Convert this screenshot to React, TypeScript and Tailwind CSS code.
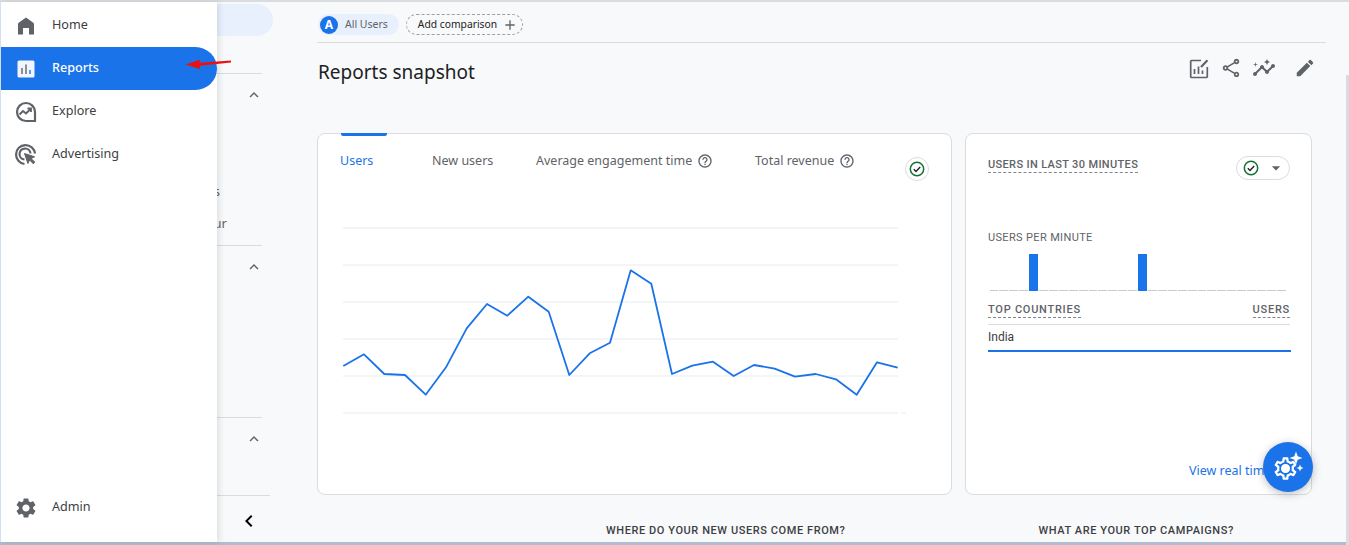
import { MdEdit, MdInsights, MdOutlineSettings, MdOutlineShare, MdSettings, MdOutlineHelpOutline, MdArrowDropDown, MdAdd, MdKeyboardArrowUp, MdChevronLeft } from "react-icons/md";

const sans = "font-['Noto_Sans',sans-serif]";
const caps = "font-['Roboto',sans-serif]";

const points = "343.3,366 364,354.3 384.3,374 405,375 425.7,394.7 446,367.3 466.7,328.3 487,304 507.3,315.7 528.3,296.7 548.7,311.7 569.3,375 589.7,353.3 610,342.7 630.7,270.3 651.3,283.7 672,374 692.3,365.7 713,361.7 733.7,376 754,365 774.7,368.7 795,376.7 815.7,374 836,379.3 856.7,394.7 877,362.3 897.7,367.7";
const gridLines = [228, 265, 302, 339, 376, 413];
const minutes = Array.from({ length: 30 }, (_, i) => i);

function CheckIcon() {
    return (
        <svg width="16" height="16" viewBox="0 0 16 16" fill="none">
            <circle cx="8" cy="8" r="6.7" stroke="#137333" strokeWidth="1.5" />
            <path d="M4.8 8.2l2.2 2.2 4.2-4.4" stroke="#202124" strokeWidth="1.4" />
        </svg>
    );
}

function HomeIcon() {
    return (
        <svg width="24" height="24" viewBox="0 0 24 24" fill="#5f6368">
            <path d="M4 20.5V10.5C4 9.5 4.500 9 5 8.600L12 3.500l7 5.100c.5.4 1 .9 1 1.900v10h-5v-6.500H9v6.500z" />
        </svg>
    );
}

function ReportsIcon() {
    return (
        <svg width="24" height="24" viewBox="0 0 24 24">
            <rect x="3.500" y="3.500" width="17" height="17" rx="1.500" fill="#f1f5fd" />
            <path d="M8 11v6" stroke="#5f6368" strokeWidth="1.400" />
            <path d="M12 7.500V17" stroke="#5f6368" strokeWidth="1.400" />
            <path d="M16 13v4" stroke="#1a73e8" strokeWidth="1.400" />
        </svg>
    );
}

function ExploreIcon() {
    return (
        <svg width="24" height="24" viewBox="0 0 24 24" fill="none" stroke="#5f6368" strokeWidth="2.200">
            <path d="M21 21h-9a9 9 0 1 1 9-9z" />
            <path d="M5.500 14.500l3.500-3.500 3 2.500 4.500-4.500" strokeWidth="2" />
            <path d="M13.500 8.500h3.500V12" strokeWidth="1.800" />
        </svg>
    );
}

function AdvertisingIcon() {
    return (
        <svg width="24" height="24" viewBox="0 0 24 24" fill="none" stroke="#5f6368" strokeWidth="2.200">
            <path d="M10.500 21A9.500 9.500 0 1 1 21 10.500" />
            <path d="M10.500 16.500A5.500 5.500 0 1 1 16.500 10.500" />
            <path d="M10.500 10.500l3.400 10 1.700-3.600 3.700 3.900 1.600-1.600-3.900-3.700 3.600-1.700z" fill="#5f6368" strokeWidth="1" />
        </svg>
    );
}

function ReportEditIcon() {
    return (
        <svg width="21" height="21" viewBox="0 0 21 21" fill="none" stroke="#5f6368" strokeWidth="1.700">
            <path d="M12 2.500H2.500A.8.8 0 0 0 1.700 3.300V18.700a.8.8 0 0 0 .8.8H17.500a.8.8 0 0 0 .8-.8V9" />
            <path d="M5.500 11v5M9.500 8.500V16M13.500 12.500V16" />
            <path d="M12 9l6.500-6.700" strokeWidth="2.200" />
        </svg>
    );
}

function AssistantIcon() {
    return (
        <svg width="50" height="50" viewBox="0 0 50 50" fill="none">
            <MdOutlineSettings x="9" y="13" size={27} color="#fff" />
            <circle cx="22.500" cy="26.500" r="4" fill="#fff" />
            <path d="M33 9.500l1.700 4.800 4.800 1.700-4.800 1.700-1.700 4.800-1.700-4.800-4.800-1.700 4.800-1.700z" fill="#fff" />
            <path d="M37 22.500l1 2.500 2.500 1-2.500 1-1 2.500-1-2.500-2.500-1 2.500-1z" fill="#fff" />
        </svg>
    );
}

function NavItem({ label, icon, active }: { label: string; icon: React.ReactNode; active?: boolean }) {
    return (
        <div className={`flex h-[43px] items-center rounded-r-[22px] pl-[13px] ${active ? "bg-[#1a73e8] text-white" : "text-[#3c4043]"}`}>
            <span className="flex w-[24px] justify-center">{icon}</span>
            <span className={`ml-[14px] text-[12.6px] ${active ? "font-medium" : ""}`}>{label}</span>
        </div>
    );
}

function SideSection({ height, lines, last }: { height: string; lines?: string[]; last?: boolean }) {
    return (
        <div className={`${height} border-b border-[#dadce0] ${last ? "mr-0" : "mr-[8px]"}`}>
            <div className={`flex justify-end pt-[12px] text-[#5f6368] ${last ? "mr-[7px]" : "-mr-[1px]"}`}>
                <MdKeyboardArrowUp size={18} />
            </div>
            {lines && (
                <div className="mt-[79px] flex flex-col items-end gap-[16px] pr-[35px] text-[13px] leading-[16px] text-[#5f6368]">
                    {lines.map((l) => (
                        <span key={l} className="first:mr-[7px]">{l}</span>
                    ))}
                </div>
            )}
        </div>
    );
}

function Sidebar() {
    return (
        <aside className="flex w-[270px] shrink-0 flex-col">
            <div className="mr-[8px] h-[72px] border-b border-[#dadce0]">
                <div className="mt-[2px] -mr-[11px] h-[32px] rounded-r-[16px] bg-[#e8f0fe]" />
            </div>
            <SideSection height="h-[172px]" lines={["Search queries", "User behaviour"]} />
            <SideSection height="h-[172px]" />
            <SideSection height="h-[78px]" last />
            <div className="flex justify-end pt-[13px] pr-[9px] text-black">
                <MdChevronLeft size={24} />
            </div>
        </aside>
    );
}

function Tab({ label, width, help, active }: { label: string; width: string; help?: boolean; active?: boolean }) {
    return (
        <div className={`${width} flex h-[18px] items-center gap-[5px] text-[12.5px] leading-[18px] ${active ? "text-[#1a73e8]" : "text-[#5f6368]"}`}>
            <span>{label}</span>
            {help && <MdOutlineHelpOutline size={16} />}
        </div>
    );
}

function UsersChart() {
    return (
        <svg width="590" height="200" viewBox="330 220 590 200" className="mt-[39px] ml-[12px] block">
            {gridLines.map((y) => (
                <line key={y} x1="343" x2="898" y1={y} y2={y} stroke="#e8eaed" strokeWidth="1" />
            ))}
            <line x1="901" x2="906" y1="413" y2="413" stroke="#e8eaed" strokeWidth="1" />
            <polyline points={points} fill="none" stroke="#1a73e8" strokeWidth="1.800" strokeLinejoin="round" />
        </svg>
    );
}

function MainCard() {
    return (
        <section className="relative h-[362px] w-[635px] shrink-0 rounded-[8px] border border-[#dadce0] bg-white">
            <div className="absolute -top-px left-[23px] h-[3px] w-[46px] rounded-b-[2px] bg-[#1a73e8]" />
            <div className="flex pt-[18px] pl-[22px]">
                <Tab label="Users" width="w-[92px]" active />
                <Tab label="New users" width="w-[104px]" />
                <Tab label="Average engagement time" width="w-[219px]" help />
                <Tab label="Total revenue" width="w-[150px]" help />
                <div className="mt-[5px] flex h-[24px] w-[24px] items-center justify-center rounded-full border border-[#dadce0]">
                    <CheckIcon />
                </div>
            </div>
            <UsersChart />
        </section>
    );
}

function RealtimeCard() {
    return (
        <section className="flex h-[362px] w-[347px] shrink-0 flex-col rounded-[8px] border border-[#dadce0] bg-white pr-[21px] pl-[22px]">
            <div className="mt-[22px] flex items-start justify-between">
                <span className={`${caps} mt-[2px] border-b border-dashed border-[#80868b] text-[11px] leading-[14px] font-medium tracking-[0.35px] text-[#5f6368]`}>USERS IN LAST 30 MINUTES</span>
                <div className="flex h-[24px] w-[54px] items-center rounded-full border border-[#dadce0] pl-[6px] text-[#5f6368]">
                    <CheckIcon />
                    <MdArrowDropDown size={20} className="ml-[7px]" />
                </div>
            </div>
            <span className={`${caps} mt-[51px] text-[11px] leading-[14px] tracking-[0.35px] text-[#5f6368]`}>USERS PER MINUTE</span>
            <div className="mt-[9px] ml-[1px] flex h-[37px] w-[297px] items-end">
                {minutes.map((m) => (
                    <div key={m} className="flex-1 px-[0.5px]">
                        {m === 4 || m === 15 ? <div className="h-[37px] bg-[#1a73e8]" /> : <div className="h-px bg-[#c8cbd0]" />}
                    </div>
                ))}
            </div>
            <div className="mt-[12px] flex justify-between border-b border-[#dadce0] pb-[6px]">
                <span className={`${caps} border-b border-dashed border-[#80868b] text-[11px] leading-[14px] font-medium tracking-[0.75px] text-[#5f6368]`}>TOP COUNTRIES</span>
                <span className={`${caps} border-b border-dashed border-[#80868b] text-[11px] leading-[14px] font-medium tracking-[0.75px] text-[#5f6368]`}>USERS</span>
            </div>
            <div className={`${caps} -mr-[1px] h-[27px] border-b-2 border-[#1a73e8] pt-[4px] text-[12px] leading-[16px] text-[#3c4043]`}>India</div>
            <div className="mt-auto mb-[14px] ml-[201px] text-[12.5px] leading-[18px] whitespace-nowrap text-[#1a73e8]">View real time</div>
        </section>
    );
}

function ChipRow() {
    return (
        <div className="flex h-[41px] items-center gap-[7px] border-b border-[#dadce0] pl-[1px]">
            <div className="mt-[5px] flex h-[21px] items-center rounded-full bg-[#e8f0fe] pr-[11px] text-[10.5px] text-[#5f6368]">
                <span className="ml-[2px] flex h-[18px] w-[18px] items-center justify-center rounded-full bg-[#1a73e8] text-[12px] font-bold text-white">A</span>
                <span className="ml-[7px]">All Users</span>
            </div>
            <div className="mt-[5px] flex h-[21px] items-center gap-[5px] rounded-full border border-dashed border-[#9aa0a6] pr-[4px] pl-[11px] text-[10.3px] text-[#202124]">
                <span>Add comparison</span>
                <MdAdd size={16} className="text-[#5f6368]" />
            </div>
        </div>
    );
}

function TitleRow() {
    return (
        <div className="flex h-[90px] pr-[10px]">
            <h1 className="mt-[14px] ml-[1px] text-[19px] leading-[30px] text-[#202124]">Reports snapshot</h1>
            <div className="ml-auto flex h-[24px] items-center pt-[25px] text-[#5f6368]">
                <ReportEditIcon />
                <MdOutlineShare size={22} className="ml-[10px]" />
                <MdInsights size={24} className="ml-[10px]" />
                <MdEdit size={22} className="ml-[18px]" />
            </div>
        </div>
    );
}

export default function App() {
    return (
        <div className={`${sans} relative flex h-[545px] w-[1349px] flex-col overflow-hidden bg-[#f8f9fb] pt-[2px]`}>
            <div className="absolute top-0 left-0 h-[2px] w-full bg-[#dadce0]" />
            <div className="flex min-h-0 flex-1">
                <Sidebar />
                <main className="flex flex-1 flex-col pr-[23px] pl-[47px]">
                    <ChipRow />
                    <TitleRow />
                    <div className="flex gap-[13px]">
                        <MainCard />
                        <RealtimeCard />
                    </div>
                    <div className={`${caps} mt-[29px] flex text-[11px] leading-[14px] font-medium tracking-[0.58px] text-[#3c4043]`}>
                        <span className="ml-[289px]">WHERE DO YOUR NEW USERS COME FROM?</span>
                        <span className="ml-[193px]">WHAT ARE YOUR TOP CAMPAIGNS?</span>
                    </div>
                </main>
            </div>
            <div className="absolute bottom-0 left-0 h-[3px] w-full bg-[#b0bccf]" />
            <div className="absolute top-[75px] right-0 bottom-0 w-[3px] bg-[#d8dbe0]" />
            <nav className="absolute top-[2px] bottom-[3px] left-0 flex w-[217px] flex-col border-l border-[#d3e0f4] bg-white shadow-[2px_0_6px_rgba(60,64,67,0.15)]">
                <div className="h-[2px]" />
                <NavItem label="Home" icon={<HomeIcon />} />
                <NavItem label="Reports" icon={<ReportsIcon />} active />
                <NavItem label="Explore" icon={<ExploreIcon />} />
                <NavItem label="Advertising" icon={<AdvertisingIcon />} />
                <div className="mt-auto mb-[13px]">
                    <NavItem label="Admin" icon={<MdSettings size={24} className="text-[#5f6368]" />} />
                </div>
            </nav>
            <svg className="absolute top-[58px] left-[184px]" width="50" height="14" viewBox="0 0 50 14">
                <polygon points="1.500,6.500 16,1.800 15.500,4.700 47,2.500 47,4.500 16,7.800 16,11" fill="#ee0f0f" />
            </svg>
            <button className="absolute top-[442px] left-[1263px] flex h-[50px] w-[50px] items-center justify-center rounded-full bg-[#1a73e8] shadow-[0_2px_8px_rgba(60,64,67,0.35)]">
                <AssistantIcon />
            </button>
        </div>
    );
}
